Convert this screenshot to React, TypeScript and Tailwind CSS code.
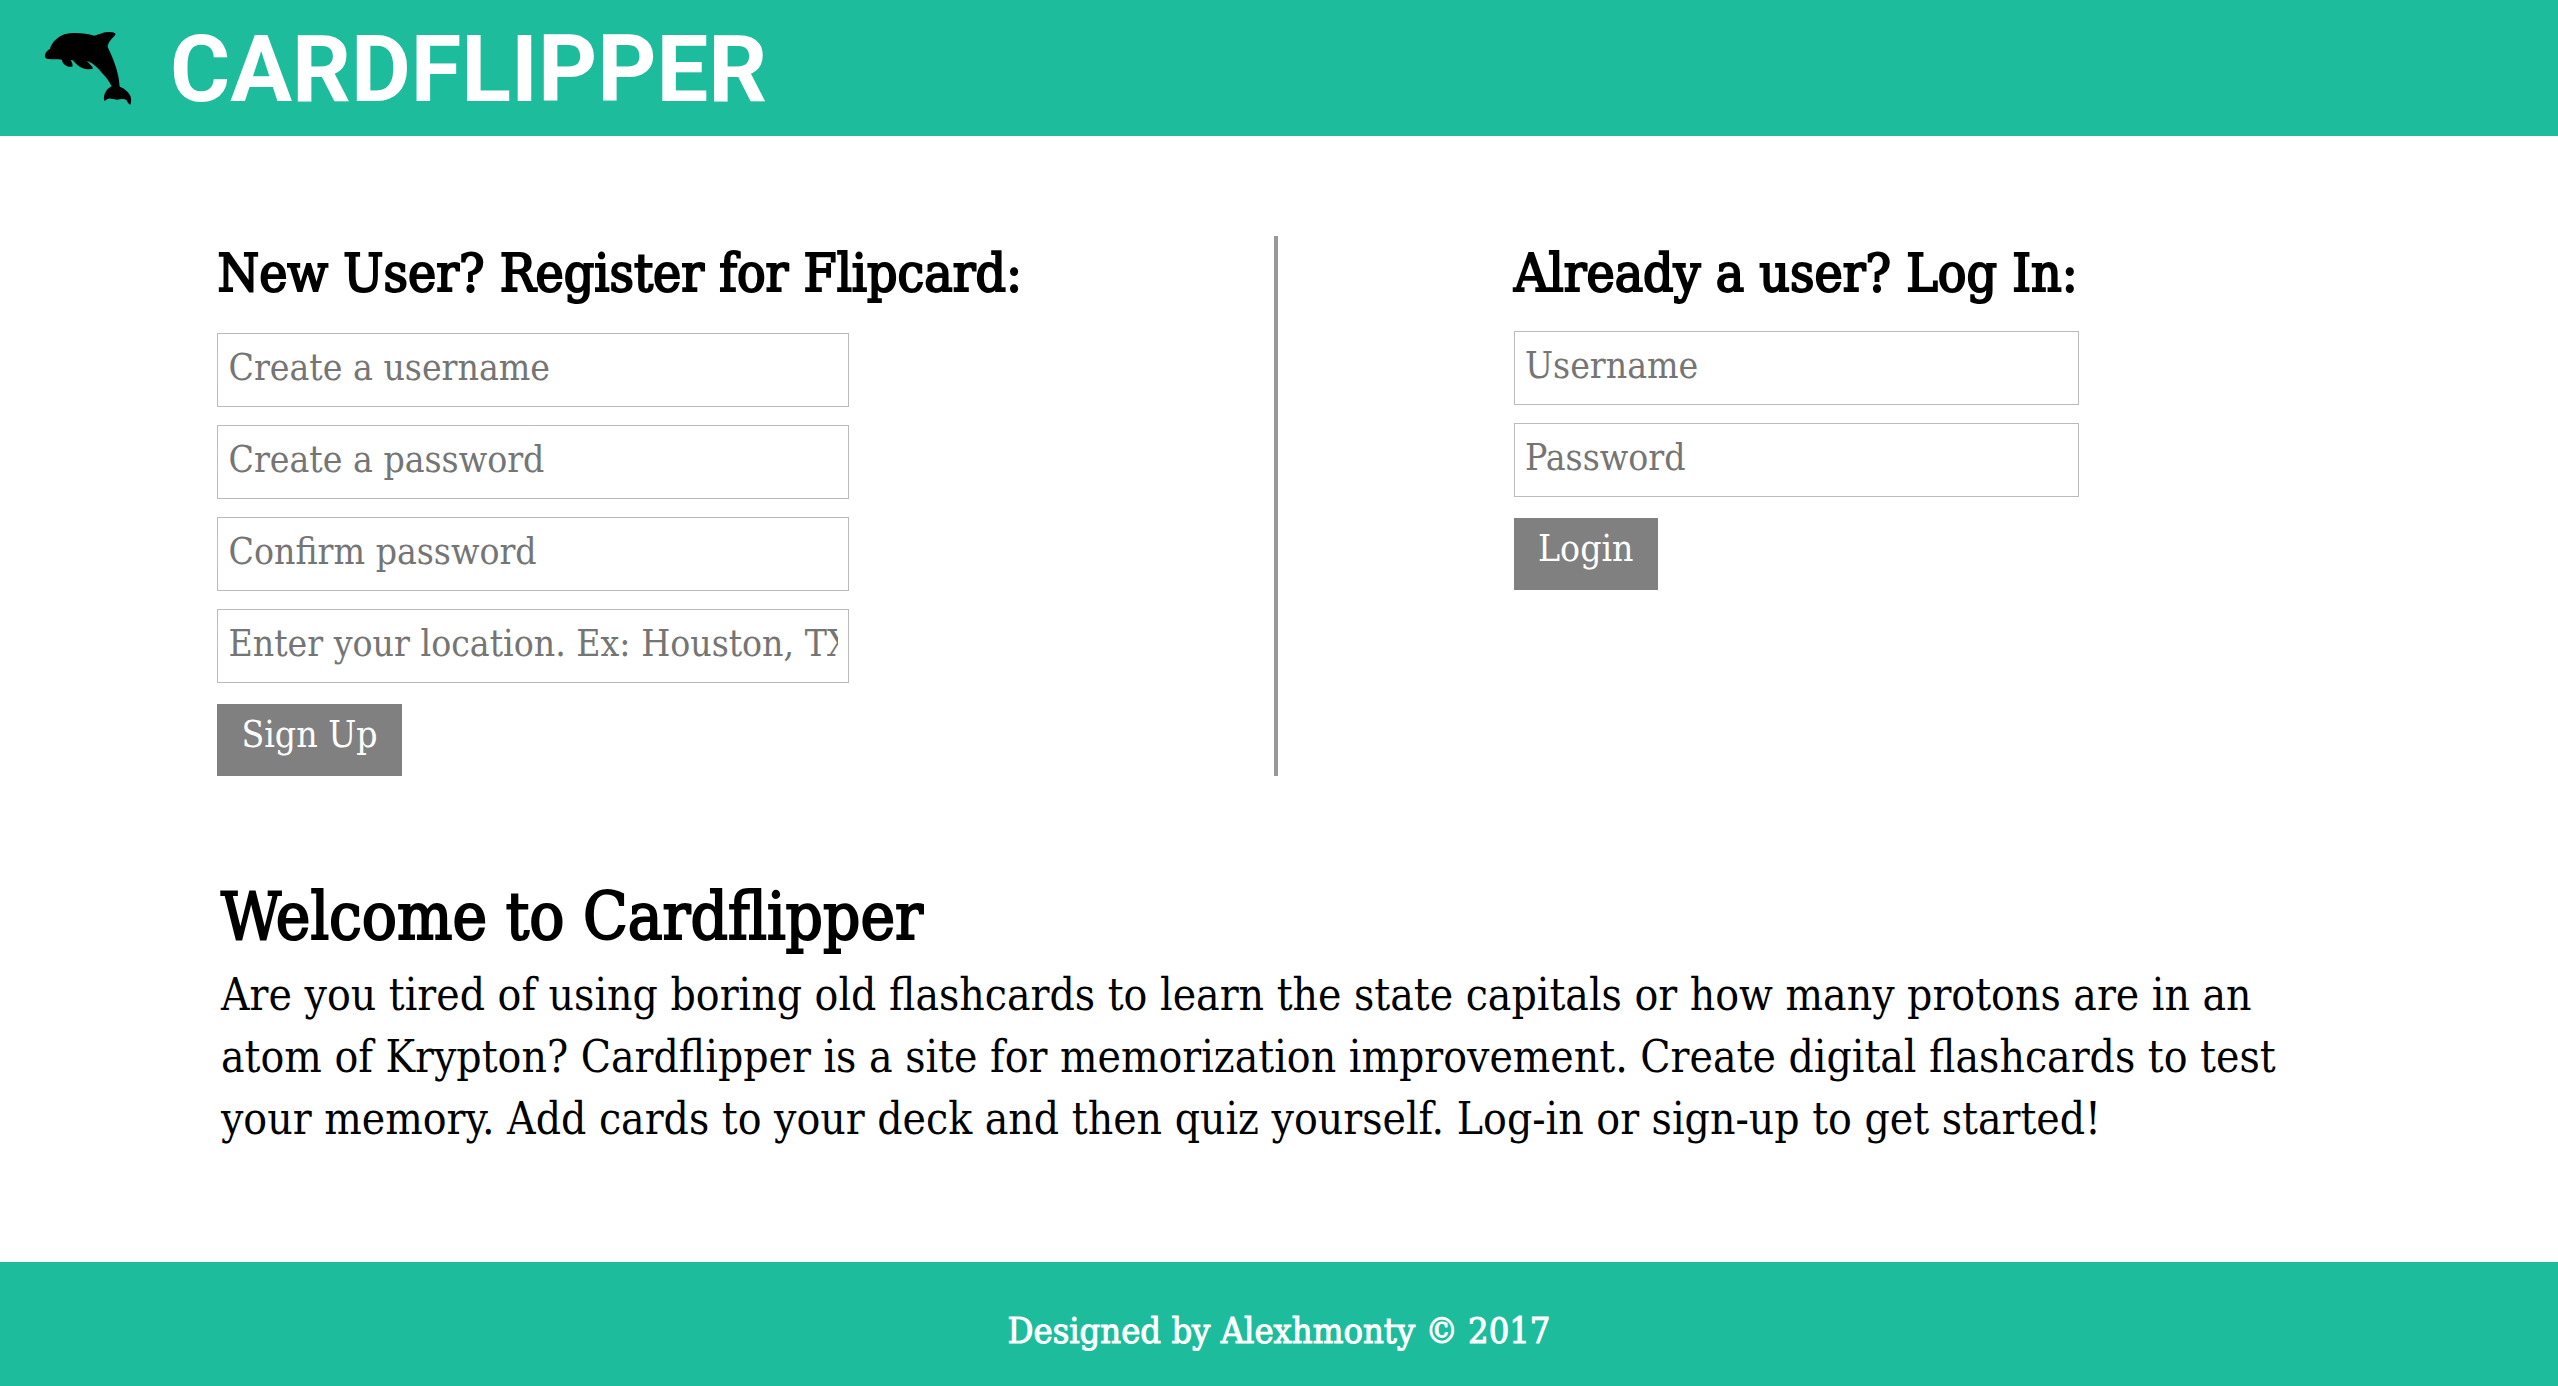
import React from "react";

type Field = { label: string; type: string };

const registerFields: Field[] = [
  { label: "Create a username", type: "text" },
  { label: "Create a password", type: "password" },
  { label: "Confirm password", type: "password" },
  { label: "Enter your location. Ex: Houston, TX", type: "text" },
];

const loginFields: Field[] = [
  { label: "Username", type: "text" },
  { label: "Password", type: "password" },
];

function Dolphin() {
  return (
    <svg viewBox="0 0 360 300" className="h-[100px] w-[120px] shrink-0" aria-hidden="true">
      <path d="M45 117C44 109 48 99 60 93C64 76 80 58 103 49C127 43 163 44 193 53C205 51 217 43 233 42C245 41 255 43 257 48C255 56 234 67 233 87C246 114 258 142 264 171C267 184 268 196 269 206C283 211 297 222 302 236C304 245 304 255 301 260C296 258 292 253 290 247C279 240 271 245 261 245C250 244 243 241 236 242C231 242 227 247 223 249C220 240 222 227 229 218C234 211 240 208 245 205C237 188 225 174 214 163C203 149 193 141 186 136L170 128C177 136 187 144 189 151C183 156 169 154 159 151C147 147 137 136 127 126L122 127C127 134 129 141 127 146C118 148 106 143 101 137C97 132 96 128 96 125C82 123 67 125 55 123C49 122 46 121 45 117Z" />
    </svg>
  );
}

function Fields({ fields }: { fields: Field[] }) {
  return (
    <>
      {fields.map((f) => (
        <input
          key={f.label}
          type={f.type}
          placeholder={f.label}
          aria-label={f.label}
          className="h-[74px] w-full border border-[#bbbbbb] bg-white px-2.5 pb-1.5 text-[37px] text-black placeholder:text-[#757575]"
        />
      ))}
    </>
  );
}

function Submit({ children }: { children: React.ReactNode }) {
  return (
    <button type="submit" className="mt-[3px] h-[72px] self-start bg-[#808080] px-6 pb-2.5 text-[37px] text-white">
      {children}
    </button>
  );
}

export default function App() {
  return (
    <div className="flex min-h-screen flex-col bg-white font-['DejaVu_Serif_Condensed','DejaVu_Serif',serif] text-black">
      <header className="flex h-[136px] items-center gap-5 bg-[#1cbc9c] pl-[30px]">
        <Dolphin />
        <h1 className="pt-1 font-['Roboto',sans-serif] text-[92px] leading-none font-bold text-white">CARDFLIPPER</h1>
      </header>

      <main className="flex-1 pt-[100px]">
        <div className="grid grid-cols-2">
          <section className="pt-2 pl-[17%]">
            <h2 className="text-[53px] leading-[58px] font-normal whitespace-nowrap [-webkit-text-stroke:2px_currentColor]">
              New User? Register for Flipcard:
            </h2>
            <form className="mt-[31px] flex w-[632px] flex-col gap-[18px]" onSubmit={(e) => e.preventDefault()}>
              <Fields fields={registerFields} />
              <Submit>Sign Up</Submit>
            </form>
          </section>
          <section className="-ml-[5px] border-l-4 border-[#999999] pt-2 pl-[236px]">
            <h2 className="text-[53px] leading-[58px] font-normal whitespace-nowrap [-webkit-text-stroke:2px_currentColor]">
              Already a user? Log In:
            </h2>
            <form className="mt-[29px] flex w-[565px] flex-col gap-[18px]" onSubmit={(e) => e.preventDefault()}>
              <Fields fields={loginFields} />
              <Submit>Login</Submit>
            </form>
          </section>
        </div>

        <section className="mt-[106px] px-[221px] pb-[112px]">
          <h2 className="text-[65px] leading-[70px] font-normal [-webkit-text-stroke:2px_currentColor]">Welcome to Cardflipper</h2>
          <p className="mt-3 text-[44px] leading-[62px]">
            Are you tired of using boring old flashcards to learn the state capitals or how many protons are in an atom of
            Krypton? Cardflipper is a site for memorization improvement. Create digital flashcards to test your memory. Add
            cards to your deck and then quiz yourself. Log-in or sign-up to get started!
          </p>
        </section>
      </main>

      <footer className="flex h-[124px] items-center justify-center bg-[#1cbc9c] pt-3.5 text-[36px] leading-10 text-white [-webkit-text-stroke:1px_currentColor]">
        Designed by Alexhmonty © 2017
      </footer>
    </div>
  );
}
